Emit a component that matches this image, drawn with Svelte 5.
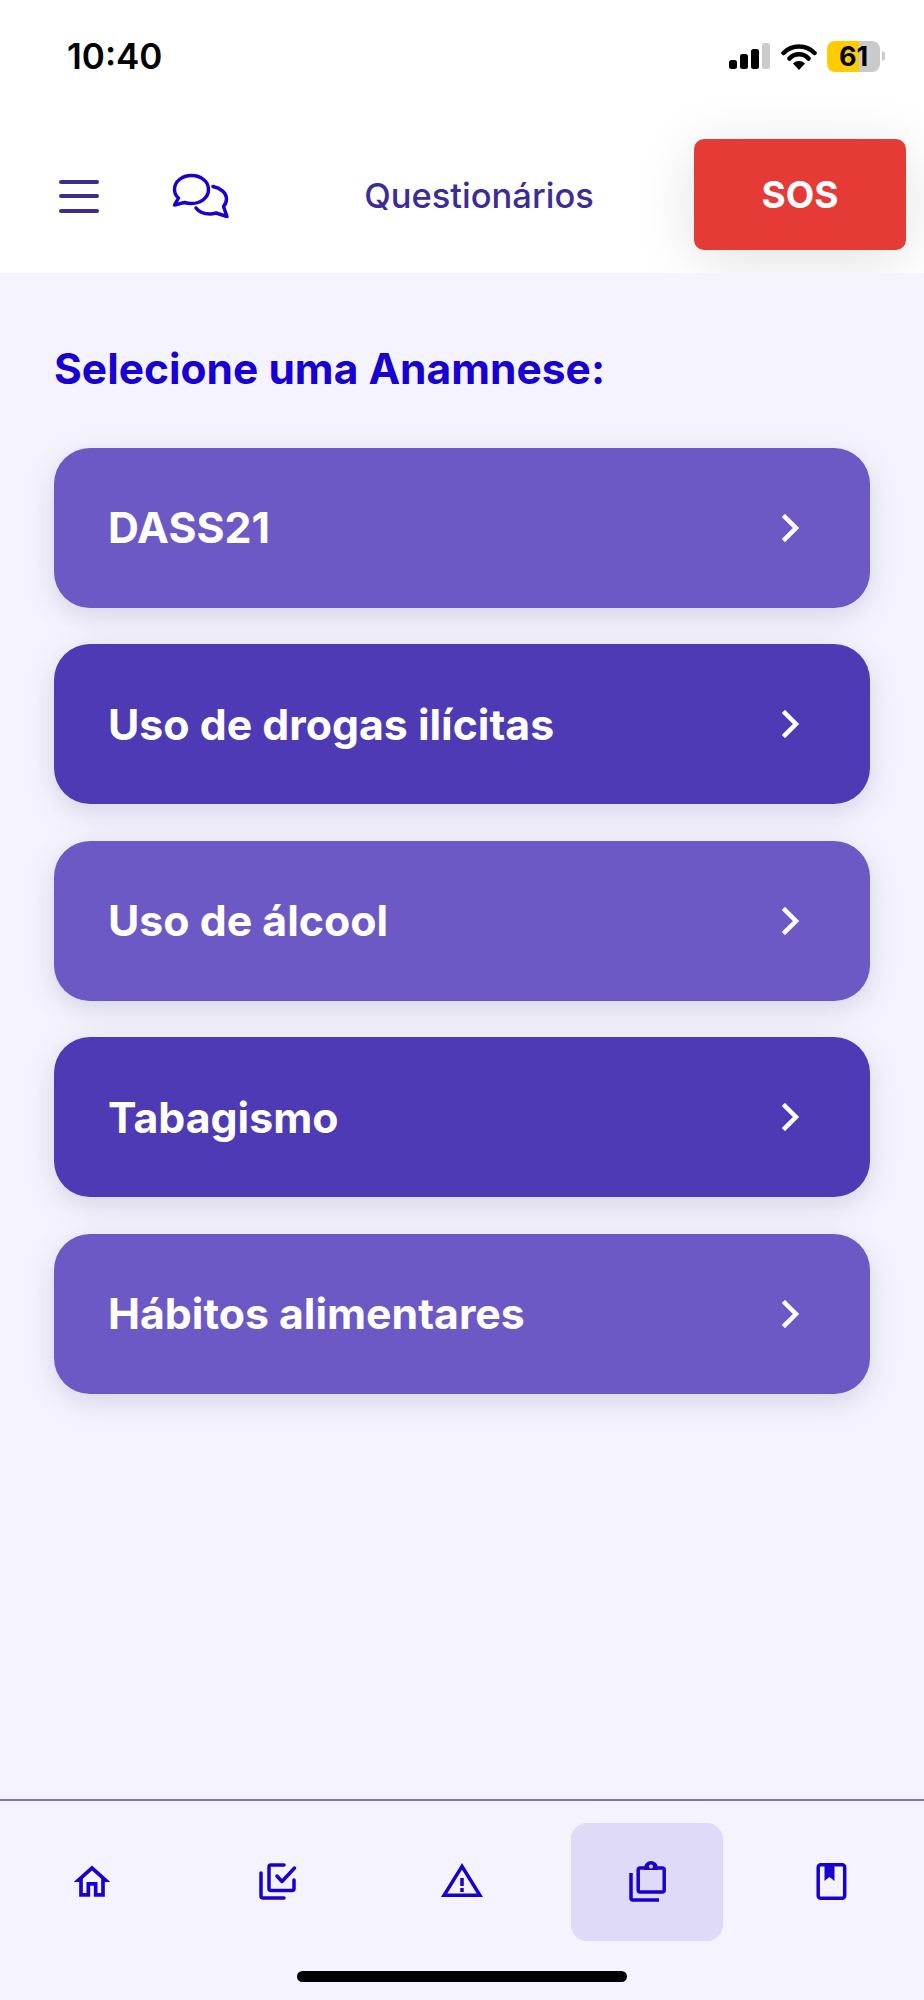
<script lang="ts">
	const items = [
		{ label: 'DASS21', dark: false },
		{ label: 'Uso de drogas ilícitas', dark: true },
		{ label: 'Uso de álcool', dark: false },
		{ label: 'Tabagismo', dark: true },
		{ label: 'Hábitos alimentares', dark: false }
	];
</script>

<div class="page">
	<div class="top">
		<div class="status">
			<span class="time">10:40</span>
			<div class="status-icons">
				<svg width="42" height="26" viewBox="0 0 42 26" aria-hidden="true">
					<rect x="0" y="17" width="8" height="9" rx="2.5" fill="#000" />
					<rect x="11" y="11" width="8" height="15" rx="2.5" fill="#000" />
					<rect x="22" y="6" width="8" height="20" rx="2.5" fill="#000" />
					<rect x="33" y="0" width="8" height="26" rx="2.5" fill="#ccc" />
				</svg>
				<svg class="wifi" width="36" height="27" viewBox="0 0 36 27" aria-hidden="true">
					<path d="M2.5 10A22 22 0 0 1 33.5 10M8.500 15.500a13 13 0 0 1 19 0" fill="none" stroke="#000" stroke-width="4.500" stroke-linecap="round" />
					<path d="M12 20.500a8.500 8.500 0 0 1 12 0L18 27z" fill="#000" />
				</svg>
				<div class="battery">
					<div class="battery-body"><span>61</span></div>
					<div class="battery-cap"></div>
				</div>
			</div>
		</div>
		<header>
			<button class="icon-btn menu" aria-label="Menu">
				<span></span><span></span><span></span>
			</button>
			<button class="icon-btn chat" aria-label="Chat">
				<svg width="58" height="46" viewBox="0 0 58 46" fill="none" stroke="#1800d2" stroke-width="3.500" stroke-linejoin="round" stroke-linecap="round">
					<path d="M19.500 2.500C10 2.500 2.500 8.500 2.500 16.500c0 3.500 1.500 6.500 4 8.500L2.500 32l10-2.500c2 .6 4.500 1 7 1 9.500 0 17-6 17-14S29 2.500 19.500 2.500z" />
					<path d="M41 13.500c7 1.500 13.500 6 13.500 12.500 0 3-1.200 5.500-3 7.500l3.500 10-11-3.500c-2 .6-4 1-6 1-6 0-11-2-14-6" />
				</svg>
			</button>
			<h1>Questionários</h1>
			<button class="sos">SOS</button>
		</header>
	</div>

	<main>
		<h2>Selecione uma Anamnese:</h2>
		<div class="list">
			{#each items as item}
				<button class="card" class:dark={item.dark}>
					<span>{item.label}</span>
					<svg width="18" height="28" viewBox="0 0 18 28" fill="none" stroke="#fff" stroke-width="4.500" stroke-linecap="square">
						<path d="M3 3l11 11L3 25" />
					</svg>
				</button>
			{/each}
		</div>
	</main>

	<nav>
		<div class="tabs">
			<button class="tab" aria-label="Início">
				<svg width="44" height="44" viewBox="0 0 24 24" fill="#1800d2">
					<path d="M12 5.690l5 4.500V18h-2v-6H9v6H7v-7.810l5-4.500M12 3L2 12h3v8h6v-6h2v6h6v-8h3L12 3z" />
				</svg>
			</button>
			<button class="tab" aria-label="Tarefas">
				<svg width="44" height="44" viewBox="0 0 44 44" fill="none" stroke="#1800d2" stroke-width="3.500" stroke-linecap="round" stroke-linejoin="round">
					<path d="M6 13v23a2 2 0 0 0 2 2h21" />
					<path d="M29 5H16a2 2 0 0 0-2 2v21.500a2 2 0 0 0 2 2h21a2 2 0 0 0 2-2V20" />
					<path d="M22 16l5 5.500L39.500 8" />
				</svg>
			</button>
			<button class="tab" aria-label="Alertas">
				<svg width="44" height="44" viewBox="0 0 44 44" fill="none" stroke="#1800d2" stroke-width="3.500">
					<path d="M22 6.300L4.100 35.250h35.800z" />
					<path d="M22 18v8M22 28v4" />
				</svg>
			</button>
			<button class="tab active" aria-label="Questionários">
				<svg width="44" height="44" viewBox="0 0 44 44" fill="none" stroke="#1800d2" stroke-width="3.500" stroke-linejoin="round">
					<path d="M6 13v25a2 2 0 0 0 2 2h26" />
					<rect x="13.200" y="8" width="26" height="24" rx="2" />
					<path d="M19 10V8a7 7 0 0 1 14 0v2z" fill="#1800d2" stroke="none" />
					<circle cx="26" cy="6.500" r="2" fill="#dfdaf7" stroke="none" />
				</svg>
			</button>
			<button class="tab" aria-label="Livro">
				<svg width="44" height="44" viewBox="0 0 44 44" fill="none" stroke="#1800d2" stroke-width="3.500" stroke-linejoin="round">
					<rect x="8.200" y="4.800" width="26.500" height="33.500" rx="2.500" />
					<path d="M14.500 5h10v16l-5-4-5 4z" fill="#1800d2" stroke="none" />
				</svg>
			</button>
		</div>
		<div class="home-bar"></div>
	</nav>
</div>

<style>
	:global(body) {
		margin: 0;
		background: #f5f4fe;
	}

	.page {
		display: flex;
		flex-direction: column;
		height: 2000px;
		font-family: Inter, 'Liberation Sans', sans-serif;
		background: #f5f4fe;
	}

	button {
		border: 0;
		background: none;
		padding: 0;
		font: inherit;
	}

	.top {
		background: #fff;
		height: 273px;
		flex: none;
		overflow: hidden;
	}

	.status {
		display: flex;
		justify-content: space-between;
		align-items: center;
		box-sizing: border-box;
		height: 115px;
		padding: 0 39px 3px 67px;
	}

	.time {
		font-size: 35px;
		font-weight: 600;
		color: #000;
	}

	.status-icons {
		display: flex;
		align-items: center;
		gap: 10px;
	}

	.battery {
		display: flex;
		align-items: center;
		gap: 2px;
	}

	.battery-body {
		width: 53px;
		height: 31px;
		border-radius: 8px;
		background: linear-gradient(90deg, #ffcc00 0 60%, #cacaca 60%);
		display: flex;
		align-items: center;
		justify-content: center;
	}

	.battery-body span {
		font-size: 27px;
		font-weight: 700;
		color: #000;
	}

	.battery-cap {
		width: 3px;
		height: 10px;
		border-radius: 0 3px 3px 0;
		background: #cacaca;
	}

	header {
		display: flex;
		align-items: center;
		height: 158px;
		padding: 0 18px 0 59px;
	}

	.icon-btn {
		display: flex;
	}

	.menu {
		flex-direction: column;
		gap: 10.500px;
		width: 40px;
		margin-top: 4px;
	}

	.menu span {
		height: 4px;
		border-radius: 2px;
		background: #3e2c96;
	}

	.chat {
		margin: 4px 0 0 73px;
	}

	h1 {
		flex: 1;
		margin: 0;
		text-align: center;
		font-size: 34.500px;
		font-weight: 500;
		color: #3e2c96;
		padding: 3px 0 0 34px;
	}

	.sos {
		width: 212px;
		height: 111px;
		border-radius: 10px;
		background: #e53a35;
		color: #fff;
		font-size: 37px;
		font-weight: 700;
		box-shadow: 0 10px 60px rgba(0, 0, 0, 0.12);
	}

	main {
		flex: 1;
		padding: 70px 54px 0;
	}

	h2 {
		margin: 0 0 53.500px;
		font-size: 42.500px;
		line-height: 51px;
		font-weight: 700;
		color: #1800d2;
	}

	.list {
		display: flex;
		flex-direction: column;
		gap: 36.500px;
	}

	.card {
		display: flex;
		align-items: center;
		justify-content: space-between;
		height: 160px;
		padding: 0 70px 0 54px;
		border-radius: 36px;
		background: #6c59c6;
		color: #fff;
		font-size: 42.800px;
		font-weight: 700;
		box-shadow: 0 8px 30px rgba(40, 30, 90, 0.15);
	}

	.card.dark {
		background: #4e3ab4;
	}

	nav {
		flex: none;
		height: 201px;
		box-sizing: border-box;
		border-top: 2px solid #7d72c6;
		position: relative;
	}

	.tabs {
		display: grid;
		grid-template-columns: repeat(5, 1fr);
		padding-top: 22px;
	}

	.tab {
		display: flex;
		align-items: center;
		justify-content: center;
		justify-self: center;
		width: 152px;
		height: 118px;
		border-radius: 16px;
	}

	.tab.active {
		background: #dfdaf7;
	}

	.home-bar {
		position: absolute;
		left: 297px;
		bottom: 18px;
		width: 330px;
		height: 11px;
		border-radius: 6px;
		background: #000;
	}
</style>
